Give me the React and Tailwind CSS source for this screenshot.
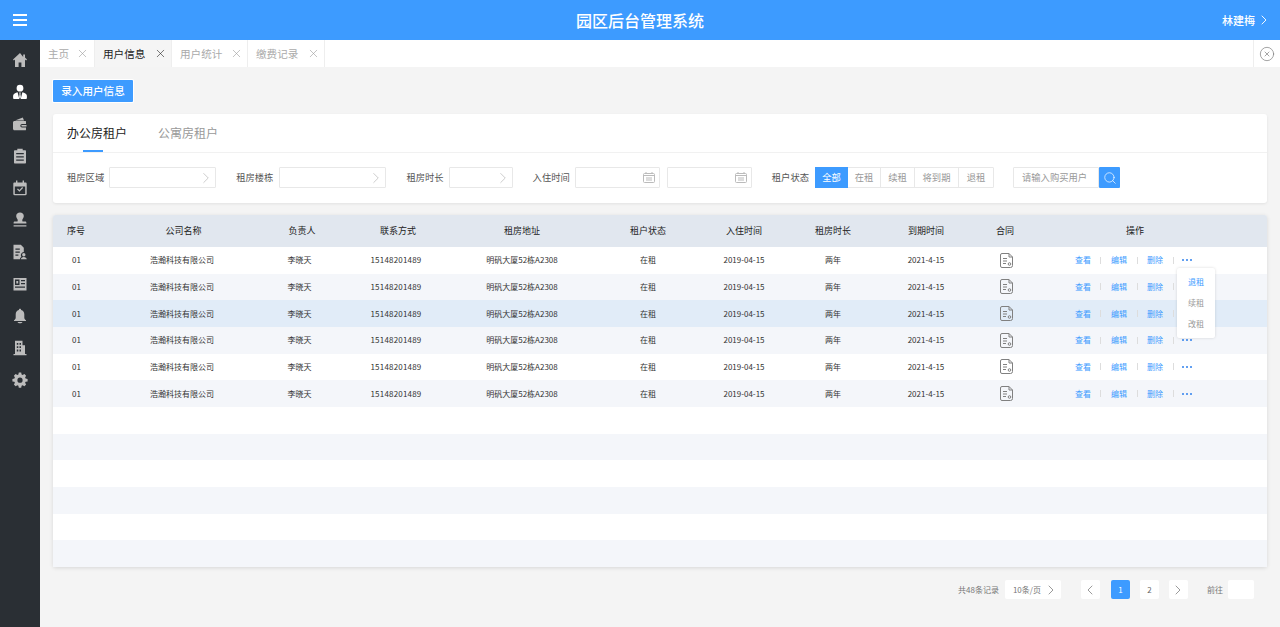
import { ChevronRight, ChevronLeft, X, Search, CircleX } from 'lucide-react'

const NAV = [
  <path key="home" d="M8 1 1 7.5l.9 1L3 7.6V15h3.6v-4.5h2.8V15H13V7.6l1.1.9.9-1-2-1.9V2.4h-1.8v2.5z" />,
  <path key="user" fillRule="evenodd" d="M8 .8a3.4 3.4 0 1 1 0 6.8 3.4 3.4 0 0 1 0-6.8zM5.6 8.2 7.3 15H2c-.6 0-.9-.4-.9-1v-2.200C1.100 9.800 3.600 8.700 5.600 8.200zm4.800 0c2 .5 4.500 1.600 4.500 3.600V14c0 .6-.3 1-.9 1H8.700zM7.200 8.600h1.600l-.4 1.300.5 3.300L8 14.800l-.9-1.600.5-3.300z" />,
  <path key="wallet" fillRule="evenodd" d="M3 4.500 10.800 1.500 12 4.500zM2.500 5h10.800c.6 0 .7.300.7.800V8H10a1.700 1.700 0 0 0 0 3.400h4v2c0 .6-.3.900-.9.900H2.500c-.8 0-1.500-.6-1.500-1.500V6.500C1 5.600 1.700 5 2.500 5zM10 9h4.500v1.400H10a.7.700 0 0 1 0-1.400z" />,
  <path key="clip" fillRule="evenodd" d="M5.300.8h5.400v1.400H13c.6 0 1 .4 1 1V14.500c0 .6-.4 1-1 1H3c-.6 0-1-.4-1-1V3.200c0-.6.4-1 1-1h2.300zM4.200 5v1.300h7.600V5zm0 3.200v1.300h7.600V8.200zm0 3.200v1.300h7.600v-1.300z" />,
  <path key="cal" fillRule="evenodd" d="M4 .5h1.400v2h5.200v-2H12v2h1.500c.7 0 1.200.5 1.200 1.200v10.300c0 .7-.5 1.200-1.200 1.200h-11c-.7 0-1.200-.5-1.200-1.200V3.700c0-.7.500-1.200 1.200-1.200H4zM2.800 6.500V14h10.400V6.500zM5 9.300l.9-.9 1.500 1.500 2.800-2.800.9.900-3.700 3.700z" />,
  <path key="stamp" d="M8 .5c2.200 0 3.800 1.500 3.800 3.500 0 1.500-.9 2.400-1.400 3.500-.2.5-.2 1.300.1 2h2.700c.7 0 1.200.5 1.200 1.200v.8H1.600v-.8c0-.7.5-1.200 1.200-1.200h2.700c.3-.7.300-1.500.1-2C5.100 6.400 4.200 5.500 4.200 4 4.200 2 5.800.5 8 .5zM1.600 13.200h12.800v1.400H1.600z" />,
  <path key="file" fillRule="evenodd" d="M1.500.8h7.300l3 3v4.300a3 3 0 0 0-2.400 4.700c-.8.500-1.300 1.200-1.500 2.400H1.500zM3.400 4.500v1.200h4.400V4.500zm0 3v1.200h4.400V7.500zm0 3v1.200h3V10.500zM11.800 9a1.700 1.700 0 1 1 0 3.400 1.700 1.700 0 0 1 0-3.400zm-3 6.200c.1-1.300 1.300-2.300 3-2.300s2.900 1 3 2.300z" />,
  <path key="news" fillRule="evenodd" d="M1.500 2h13v12.500h-13zM3 3.500V9h4.500V3.500zm6 .5v1.200h4V4zm0 3v1.200h4V7zM3 10.500v1.200h10v-1.200zM4.300 5h1.900v2.500H4.300z" />,
  <path key="bell" d="M8 .8c.7 0 1.100.5 1.100 1.100 2 .5 3.200 2.200 3.200 4.300v3.200c0 1.300.6 2 1.700 2.900v.7H2v-.7c1.100-.9 1.700-1.600 1.700-2.900V6.200c0-2.100 1.200-3.800 3.200-4.300C6.900 1.300 7.300.8 8 .8zM5.500 13.900h5c-.3.900-1.300 1.400-2.500 1.400s-2.200-.5-2.500-1.400z" />,
  <path key="bldg" fillRule="evenodd" d="M3 .8h7.500v4.500H13V14h1.500v1.200h-13V14H3zM4.800 3v1.800h1.500V3zm2.700 0v1.800H9V3zM4.800 6.300v1.800h1.500V6.300zm2.700 0v1.800H9V6.300zM4.800 9.600v1.800h1.500V9.600zm2.700 0v1.800H9V9.600z" />,
  <path key="gear" fillRule="evenodd" d="M6.800.6h2.400l.4 2 1 .5 1.800-1 1.700 1.700-1 1.800.5 1 2 .4v2.400l-2 .4-.5 1 1 1.800-1.700 1.700-1.800-1-1 .5-.4 2H6.800l-.4-2-1-.5-1.800 1-1.700-1.700 1-1.800-.5-1-2-.4V7l2-.4.5-1-1-1.800 1.700-1.700 1.800 1 1-.5zM8 5.600a2.600 2.600 0 1 0 0 5.200 2.600 2.600 0 0 0 0-5.200z" />,
]

const TABS = [
  { label: '主页', cls: 'w-[55px] pr-[5px]' },
  { label: '用户信息', cls: 'w-[77px] pr-[4px]', active: true },
  { label: '用户统计', cls: 'w-[76px] pr-[4px]' },
  { label: '缴费记录', cls: 'w-[77px] pr-[4px]' },
]

const COLS = 'grid grid-cols-[46px_166px_74px_118px_130px_122px_70px_108px_78px_82px_1fr] items-center text-center'
const HEADS = [
  { label: '序号' },
  { label: '公司名称', cls: 'pl-[3px]' },
  { label: '负责人' },
  { label: '联系方式' },
  { label: '租房地址' },
  { label: '租户状态' },
  { label: '入住时间' },
  { label: '租房时长' },
  { label: '到期时间' },
  { label: '合同', cls: 'pr-[2px]' },
]

function ContractIcon() {
  return (
    <svg width="13" height="15" viewBox="0 0 13 15" fill="none" stroke="#808080" strokeWidth="1" className="mx-auto">
      <path d="M2 .5h7l3.500 3.500v8.500a2 2 0 0 1-2 2H2a1.500 1.500 0 0 1-1.500-1.500V2A1.500 1.500 0 0 1 2 .5z" />
      <path d="M9 .5V4h3.500M3 5.500h4M3 8h4M3 10.500h3" />
      <circle cx="9.500" cy="11" r="1.300" />
    </svg>
  )
}

function Select({ cls }) {
  return (
    <div className={`h-[21px] border border-[#e8e8e8] bg-white flex items-center justify-end rounded-[1px] ${cls}`}>
      <ChevronRight size={18} strokeWidth={0.8} className="text-[#aaa]" />
    </div>
  )
}

function DateBox({ cls }) {
  return (
    <div className={`h-[21px] w-[85px] border border-[#e8e8e8] bg-white flex items-center justify-end pr-[4px] rounded-[1px] ${cls}`}>
      <svg width="12" height="11" viewBox="0 0 12 11" fill="none" stroke="#bbb" strokeWidth="1">
        <rect x=".5" y="1.500" width="11" height="9" rx="1" />
        <path d="M.5 3.500h11M3 6h6M3 8h6M3 0v2M9 0v2" />
      </svg>
    </div>
  )
}

function Label({ children, cls }) {
  return <span className={`text-[9.3px] text-[#555] whitespace-nowrap ${cls}`}>{children}</span>
}

function Row({ index }) {
  const bg = index === 2 ? 'bg-[#e1ecf8]' : index % 2 ? 'bg-[#f4f6fa]' : 'bg-white'
  return (
    <div className={`${COLS} ${bg} text-[8px] text-[#333]`}>
      <span className="pl-px">01</span>
      <span>浩瀚科技有限公司</span>
      <span className="pr-[5px]">李晓天</span>
      <span className="pr-[4px] tracking-[0.2px]">15148201489</span>
      <span>明矾大厦52栋A2308</span>
      <span>在租</span>
      <span>2019-04-15</span>
      <span>两年</span>
      <span>2021-4-15</span>
      <ContractIcon />
      <div className="flex items-center pl-[28px] text-[#3d9bff]">
        <span className="w-[16px]">查看</span>
        <i className="w-px h-[7px] bg-[#ddd] ml-[9px]" />
        <span className="w-[16px] ml-[10px]">编辑</span>
        <i className="w-px h-[7px] bg-[#ddd] ml-[10px]" />
        <span className="w-[16px] ml-[9px]">删除</span>
        <i className="w-px h-[7px] bg-[#ddd] ml-[10px]" />
        <span className="ml-[8px] flex gap-[2px]">
          <i className="w-[2px] h-[2px] rounded-full bg-[#2f80ed]" />
          <i className="w-[2px] h-[2px] rounded-full bg-[#2f80ed]" />
          <i className="w-[2px] h-[2px] rounded-full bg-[#2f80ed]" />
        </span>
      </div>
    </div>
  )
}

function PageBtn({ children, cls }) {
  return <div className={`w-[19px] h-[19px] bg-white rounded-[2px] flex items-center justify-center text-[#666] ${cls}`}>{children}</div>
}

export default function App() {
  return (
    <div className="h-[627px] w-[1280px] overflow-hidden flex flex-col bg-[#f4f4f4] font-['Noto_Sans_CJK_SC','Noto_Sans',sans-serif]">
      <header className="h-10 shrink-0 bg-[#3d9bff] flex items-center justify-between text-white relative">
        <svg width="14" height="12" viewBox="0 0 14 12" fill="#fff" className="ml-[13px]">
          <rect y="0" width="14" height="2" />
          <rect y="5" width="14" height="2" />
          <rect y="10" width="14" height="2" />
        </svg>
        <h1 className="absolute left-0 right-0 text-center text-[16px] font-medium pointer-events-none">园区后台管理系统</h1>
        <div className="flex items-center text-[11px] font-medium mr-[8px]">
          林建梅
          <ChevronRight size={16} strokeWidth={1.4} className="ml-[1px]" />
        </div>
      </header>

      <div className="flex flex-1 min-h-0">
        <aside className="w-10 shrink-0 bg-[#2a2f34] pt-1 flex flex-col items-center">
          {NAV.map((icon, i) => (
            <div key={i} className="h-8 w-10 shrink-0 flex items-center justify-center">
              <svg width="16" height="16" viewBox="0 0 16 16" fill={i === 1 ? '#ffffff' : '#bcbcbc'}>{icon}</svg>
            </div>
          ))}
        </aside>

        <main className="flex-1 min-w-0 flex flex-col">
          <div className="h-[27px] shrink-0 bg-white flex items-stretch">
            {TABS.map(t => (
              <div key={t.label} className={`${t.cls} flex items-center justify-between whitespace-nowrap pl-2 border-r border-[#eeeeee] ${t.active ? 'bg-[#f5f5f5] text-[#222]' : 'text-[#aaa]'} text-[10.6px]`}>
                <span>{t.label}</span>
                <X size={13} strokeWidth={1.1} className={t.active ? 'text-[#222]' : 'text-[#999]'} />
              </div>
            ))}
            <div className="ml-auto w-[27px] border-l border-[#eee] flex items-center justify-center">
              <CircleX size={16} strokeWidth={1} className="text-[#777]" />
            </div>
          </div>

          <div className="flex-1 min-h-0 pl-[13px] pr-[13px]">
            <button className="mt-[13px] h-[22px] w-20 bg-[#3d9bff] text-white text-[10.6px] font-medium rounded-[1px] shadow-[0_0_0_1px_#fff]">录入用户信息</button>

            <section className="mt-3 h-[89px] bg-white rounded-[3px] shadow-[0_1px_3px_rgba(0,0,0,0.08)]">
              <div className="h-[39px] flex border-b border-[#f1f1f1] pl-[14px]">
                <div className="relative w-[60px] whitespace-nowrap flex items-center justify-center text-[12px] text-[#222]">
                  办公房租户
                  <i className="absolute left-[16px] bottom-0 w-[20px] h-[2px] bg-[#3d9bff]" />
                </div>
                <div className="ml-[31px] whitespace-nowrap flex items-center text-[12px] text-[#999]">公寓房租户</div>
              </div>
              <div className="mt-[14px] pl-[14px] flex items-center">
                <Label>租房区域</Label>
                <Select cls="w-[107px] ml-[5px]" />
                <Label cls="ml-[20px]">租房楼栋</Label>
                <Select cls="w-[107px] ml-[6px]" />
                <Label cls="ml-[20px]">租房时长</Label>
                <Select cls="w-[64px] ml-[5px]" />
                <Label cls="ml-[20px]">入住时间</Label>
                <DateBox cls="ml-[5px]" />
                <DateBox cls="ml-[7px]" />
                <Label cls="ml-[20px]">租户状态</Label>
                <div className="ml-[6px] flex h-[21px] text-[9.3px] text-[#999] border border-[#e8e8e8] rounded-[1px]">
                  <span className="w-[33px] -my-px -ml-px flex items-center justify-center bg-[#3d9bff] text-white">全部</span>
                  <span className="w-[33px] flex items-center justify-center border-r border-[#e8e8e8]">在租</span>
                  <span className="w-[34px] flex items-center justify-center border-r border-[#e8e8e8]">续租</span>
                  <span className="w-[44px] flex items-center justify-center border-r border-[#e8e8e8]">将到期</span>
                  <span className="w-[34px] flex items-center justify-center">退租</span>
                </div>
                <div className="ml-[19px] w-[86px] h-[21px] border border-[#e8e8e8] flex items-center pl-[8px] text-[9.3px] text-[#999] rounded-[1px]">请输入购买用户</div>
                <div className="w-[21px] h-[21px] bg-[#3d9bff] flex items-center justify-center rounded-[1px]">
                  <Search size={14} strokeWidth={1.2} className="text-white" />
                </div>
              </div>
            </section>

            <section className="relative mt-3 h-[352px] rounded-[3px] overflow-visible shadow-[0_1px_4px_rgba(0,0,0,0.12)] flex flex-col">
              <div className={`${COLS} h-8 shrink-0 bg-[#e1e7ef] rounded-t-[3px] text-[9px] text-[#222]`}>
                {HEADS.map(h => <span key={h.label} className={h.cls}>{h.label}</span>)}
                <span className="pr-[44px]">操作</span>
              </div>
              <div className="flex-1 grid grid-rows-12">
                {Array.from({ length: 6 }).map((_, i) => <Row key={i} index={i} />)}
                {Array.from({ length: 6 }).map((_, i) => (
                  <div key={i} className={i % 2 ? 'bg-[#f4f6fa]' : 'bg-white'} />
                ))}
              </div>
              <div className="absolute left-[1124px] top-[53px] w-[38px] h-[70px] bg-white rounded-[2px] shadow-[0_0_3px_rgba(0,0,0,0.15)] flex flex-col items-center justify-around py-[4px] text-[8px] text-[#999]">
                <span className="text-[#3d9bff]">退租</span>
                <span>续租</span>
                <span>改租</span>
              </div>
            </section>

            <div className="mt-[13px] flex items-center text-[8px] text-[#777] pl-[905px]">
              <span className="whitespace-nowrap">共48条记录</span>
              <div className="ml-[6px] w-[56px] h-[19px] bg-white rounded-[2px] flex items-center justify-between pl-[8px] pr-[2px] shrink-0">
                10条/页
                <ChevronRight size={16} strokeWidth={1} className="text-[#666]" />
              </div>
              <PageBtn cls="ml-[20px] shrink-0"><ChevronLeft size={16} strokeWidth={1} /></PageBtn>
              <PageBtn cls="ml-[11px] shrink-0 !bg-[#3d9bff] !text-white">1</PageBtn>
              <PageBtn cls="ml-[10px] shrink-0">2</PageBtn>
              <PageBtn cls="ml-[10px] shrink-0"><ChevronRight size={16} strokeWidth={1} /></PageBtn>
              <span className="ml-[19px] whitespace-nowrap">前往</span>
              <div className="ml-[5px] w-[26px] h-[19px] bg-white rounded-[2px] shrink-0" />
            </div>
          </div>
        </main>
      </div>
    </div>
  )
}
